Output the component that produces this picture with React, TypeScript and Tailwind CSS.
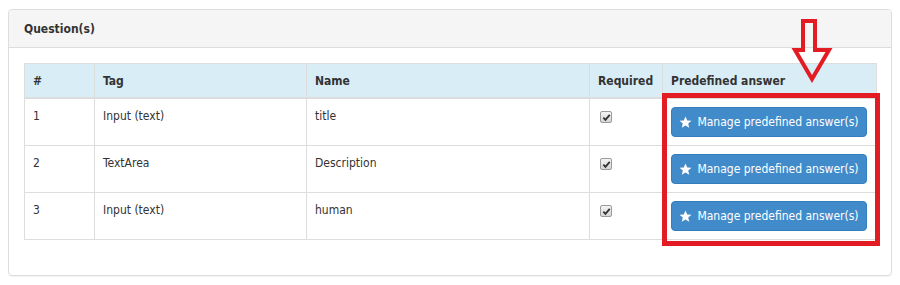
const rows = [
  { id: 1, tag: "Input (text)", name: "title" },
  { id: 2, tag: "TextArea", name: "Description" },
  { id: 3, tag: "Input (text)", name: "human" },
];

// Small filled star like the glyphicon
const Star = () => (
  <svg width="13" height="13" viewBox="0 0 24 24" className="mr-[5px] shrink-0">
    <path
      d="M12 1l3.2 7.3 7.8.6-6 5.1 1.9 7.8L12 17.7l-6.9 4.1 1.9-7.8-6-5.1 7.8-.6z"
      fill="#fff"
    />
  </svg>
);

// Grey old-style checked checkbox
const Checkbox = () => (
  <span className="mt-[3px] ml-[2px] flex h-[12px] w-[12px] items-center justify-center rounded-[2px] border border-[#9a9a9a] bg-gradient-to-b from-[#f4f4f4] to-[#d6d6d6]">
    <svg width="9" height="9" viewBox="0 0 10 10">
      <path d="M1.5 5.2l2.3 2.4L8.6 2" stroke="#333" strokeWidth="2" fill="none" />
    </svg>
  </span>
);

const th = "border border-b-2 border-[#dddddd] px-[8px] pt-[9px] pb-[7px] text-left font-bold";
const td = "border border-[#dddddd] px-[8px] pt-[9px] pb-[7px] align-top";

const App = () => {
  return (
    <div className="relative h-[285px] w-[900px] bg-white pt-[9px] pl-[8px] font-['DejaVu_Sans_Condensed','DejaVu_Sans',sans-serif] text-[12px] leading-[17px] text-[#333]">
      <div className="w-[884px] rounded-[4px] border border-[#dddddd] shadow-[0_1px_1px_rgba(0,0,0,0.05)]">
        <div className="rounded-t-[4px] border-b border-[#dddddd] bg-[#f5f5f5] px-[15px] pt-[11px] pb-[9px] font-bold">
          Question(s)
        </div>

        <div className="px-[15px] pt-[15px] pb-[35px]">
          <div className="relative">
            <table className="w-[852px] table-fixed border-collapse border border-[#dddddd]">
              <colgroup>
                <col className="w-[70px]" />
                <col className="w-[212px]" />
                <col className="w-[283px]" />
                <col className="w-[73px]" />
                <col className="w-[214px]" />
              </colgroup>
              <thead>
                <tr className="bg-[#d9edf7]">
                  <th className={th}>#</th>
                  <th className={th}>Tag</th>
                  <th className={th}>Name</th>
                  <th className={th}>Required</th>
                  <th className={th}>Predefined answer</th>
                </tr>
              </thead>
              <tbody>
                {rows.map((r) => (
                  <tr key={r.id}>
                    <td className={td}>{r.id}</td>
                    <td className={td}>{r.tag}</td>
                    <td className={td}>{r.name}</td>
                    <td className={td}>
                      <Checkbox />
                    </td>
                    <td className="border border-[#dddddd] p-[8px] align-top">
                      <button className="flex h-[30px] w-[196px] items-center justify-center rounded-[4px] border border-[#357ebd] bg-[#428bca] text-white">
                        <Star />
                        Manage predefined answer(s)
                      </button>
                    </td>
                  </tr>
                ))}
              </tbody>
            </table>

            {/* red highlight box */}
            <div className="pointer-events-none absolute top-[30px] left-[638px] h-[153px] w-[218px] border-[5px] border-[#e31b23]" />
          </div>
        </div>
      </div>

      {/* red outline arrow */}
      <svg
        className="pointer-events-none absolute top-[14px] left-[788px]"
        width="48"
        height="74"
        viewBox="0 0 48 74"
      >
        <path
          d="M15 7 H27 V36 H41 L24 65 L7 36 H15 Z"
          fill="none"
          stroke="#e31b23"
          strokeWidth="4"
          strokeLinejoin="miter"
        />
      </svg>
    </div>
  );
};

export default App;
